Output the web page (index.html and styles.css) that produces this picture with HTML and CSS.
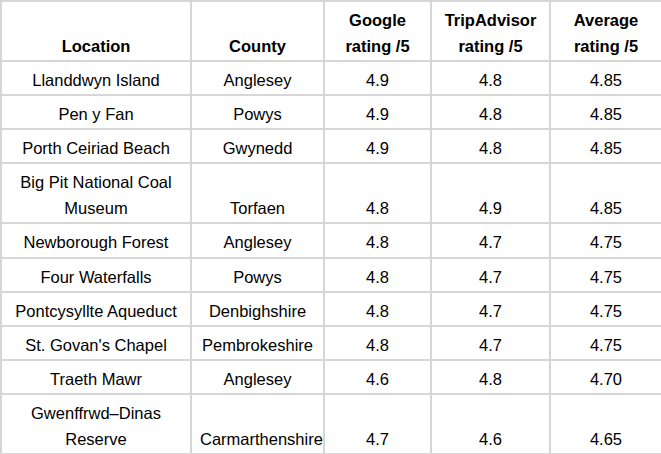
FILE: index.html
```html
<!DOCTYPE html>
<html>
<head>
<meta charset="utf-8">
<link rel="stylesheet" href="styles.css">
</head>
<body>
<table class="ratings">
  <colgroup>
    <col class="c-loc">
    <col class="c-county">
    <col class="c-google">
    <col class="c-trip">
    <col class="c-avg">
  </colgroup>
  <thead>
    <tr>
      <th>Location</th>
      <th>County</th>
      <th>Google rating /5</th>
      <th>TripAdvisor rating /5</th>
      <th>Average rating /5</th>
    </tr>
  </thead>
  <tbody>
    <tr><td>Llanddwyn Island</td><td>Anglesey</td><td>4.9</td><td>4.8</td><td>4.85</td></tr>
    <tr><td>Pen y Fan</td><td>Powys</td><td>4.9</td><td>4.8</td><td>4.85</td></tr>
    <tr><td>Porth Ceiriad Beach</td><td>Gwynedd</td><td>4.9</td><td>4.8</td><td>4.85</td></tr>
    <tr><td>Big Pit National Coal Museum</td><td>Torfaen</td><td>4.8</td><td>4.9</td><td>4.85</td></tr>
    <tr><td>Newborough Forest</td><td>Anglesey</td><td>4.8</td><td>4.7</td><td>4.75</td></tr>
    <tr><td>Four Waterfalls</td><td>Powys</td><td>4.8</td><td>4.7</td><td>4.75</td></tr>
    <tr><td>Pontcysyllte Aqueduct</td><td>Denbighshire</td><td>4.8</td><td>4.7</td><td>4.75</td></tr>
    <tr><td>St. Govan's Chapel</td><td>Pembrokeshire</td><td>4.8</td><td>4.7</td><td>4.75</td></tr>
    <tr><td>Traeth Mawr</td><td>Anglesey</td><td>4.6</td><td>4.8</td><td>4.70</td></tr>
    <tr><td>Gwenffrwd–Dinas Reserve</td><td>Carmarthenshire</td><td>4.7</td><td>4.6</td><td>4.65</td></tr>
  </tbody>
</table>
</body>
</html>
```
FILE: styles.css
```css
html, body {
  margin: 0;
  padding: 0;
  overflow: hidden;
  background: #fff;
}
.ratings {
  border-collapse: separate;
  border-spacing: 0;
  table-layout: fixed;
  width: 663px;
  border-top: 2px solid #d6d6d6;
  border-left: 2px solid #d6d6d6;
  font-family: "Liberation Sans", Arial, Helvetica, sans-serif;
  font-size: 16.5px;
  color: #000;
}
.c-loc { width: 190px; }
.c-county { width: 133px; }
.c-google { width: 107px; }
.c-trip { width: 119px; }
.c-avg { width: 112px; }
.ratings th,
.ratings td {
  border-right: 2px solid #d6d6d6;
  border-bottom: 2px solid #d6d6d6;
  padding: 5px 8px 1.1px 8px;
  line-height: 26px;
  text-align: center;
  vertical-align: bottom;
}
.ratings th {
  font-weight: bold;
}
.ratings td {
  font-weight: normal;
}
```
